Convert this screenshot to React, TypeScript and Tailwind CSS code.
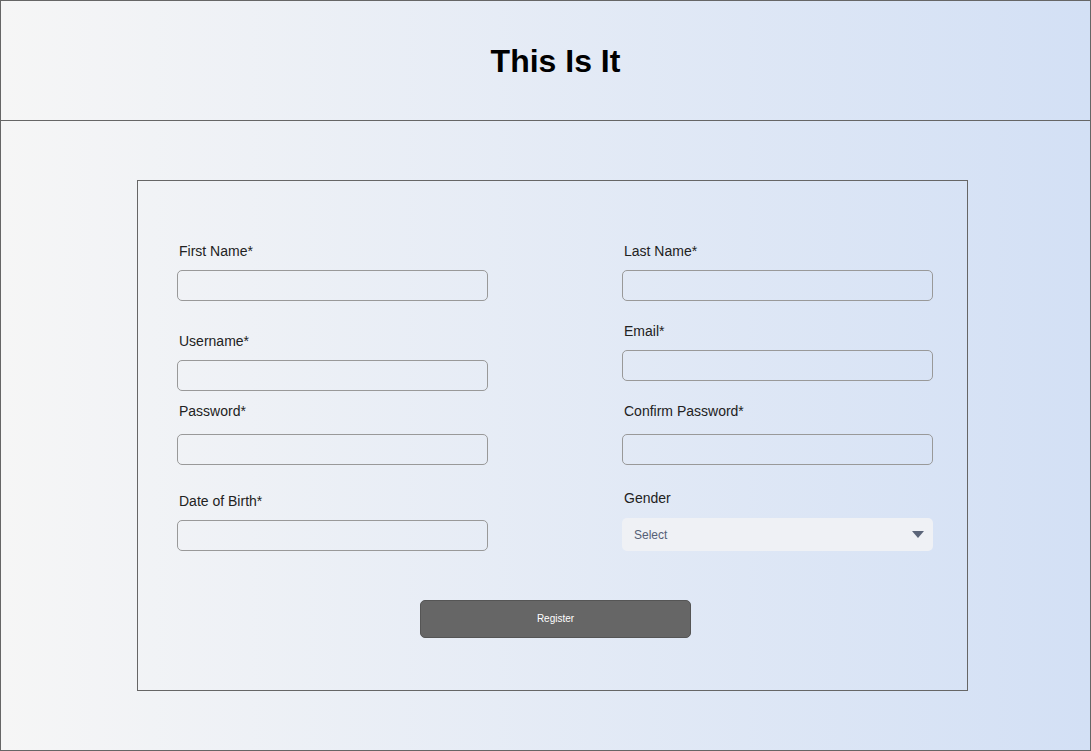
import React from "react";

function Field({ label, mt, gap }: { label: string; mt: string; gap: string }) {
  return (
    <div className={mt}>
      <div className="pl-[2px] text-[14px] leading-[17px] text-[#222]">{label}</div>
      <div className={`${gap} h-[31px] w-[311px] rounded-[5px] border border-[#999]`} />
    </div>
  );
}

export default function App() {
  return (
    <div
      className="box-border flex h-[751px] w-[1091px] flex-col border border-[#666] bg-gradient-to-r from-[#f6f6f6] to-[#d3e0f5]"
      style={{ fontFamily: '"Liberation Sans", Arial, sans-serif' }}
    >
      <div className="flex h-[120px] shrink-0 items-center justify-center border-b border-[#666] pl-[20px]">
        <h1 className="text-[32px] font-bold leading-[38px] text-black">This Is It</h1>
      </div>
      <div className="ml-[136px] mt-[59px] box-border h-[511px] w-[831px] border border-[#666]">
        <div className="flex pl-[39px]">
          <div className="flex w-[445px] flex-col">
            <Field label="First Name*" mt="mt-[62px]" gap="mt-[10px]" />
            <Field label="Username*" mt="mt-[32px]" gap="mt-[10px]" />
            <Field label="Password*" mt="mt-[12px]" gap="mt-[14px]" />
            <Field label="Date of Birth*" mt="mt-[28px]" gap="mt-[10px]" />
          </div>
          <div className="flex flex-col">
            <Field label="Last Name*" mt="mt-[62px]" gap="mt-[10px]" />
            <Field label="Email*" mt="mt-[22px]" gap="mt-[10px]" />
            <Field label="Confirm Password*" mt="mt-[22px]" gap="mt-[14px]" />
            <div className="mt-[25px]">
              <div className="pl-[2px] text-[14px] leading-[17px] text-[#222]">Gender</div>
              <div className="mt-[11px] flex h-[33px] w-[311px] items-center justify-between rounded-[5px] bg-[#eff1f5] pl-[12px] pr-[9px]">
                <span className="text-[12px] text-[#556075]">Select</span>
                <svg width="12" height="7" viewBox="0 0 12 7">
                  <path d="M0 0 L12 0 L6 7 Z" fill="#5b6579" />
                </svg>
              </div>
            </div>
          </div>
        </div>
        <div className="mt-[49px] flex pl-[282px]">
          <button className="box-border flex h-[38px] w-[271px] items-center justify-center rounded-[5px] border border-[#555] bg-[#666] pb-[2px] text-[10px] font-medium text-white">
            Register
          </button>
        </div>
      </div>
    </div>
  );
}
